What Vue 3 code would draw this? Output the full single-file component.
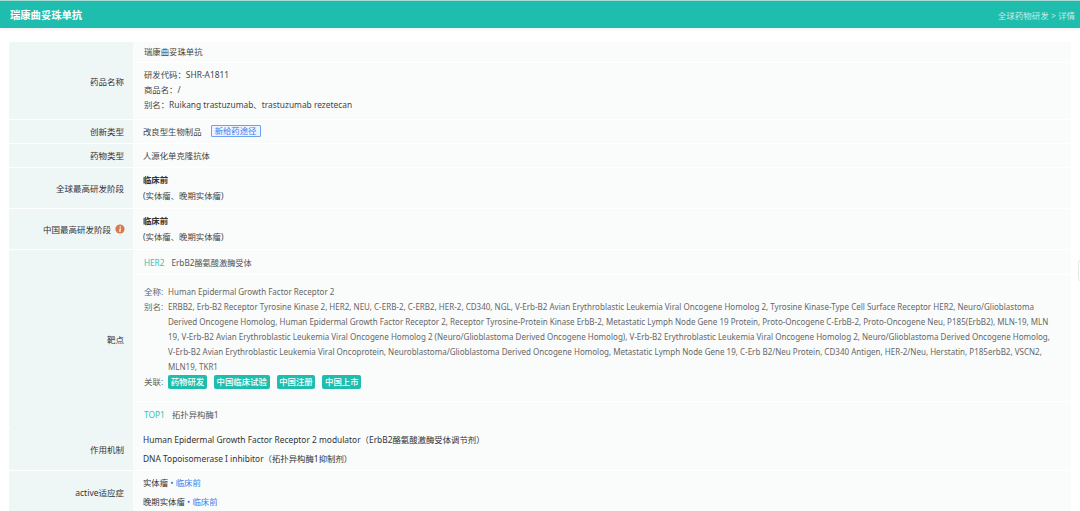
<script setup>
const aliases = 'ERBB2, Erb-B2 Receptor Tyrosine Kinase 2, HER2, NEU, C-ERB-2, C-ERB2, HER-2, CD340, NGL, V-Erb-B2 Avian Erythroblastic Leukemia Viral Oncogene Homolog 2, Tyrosine Kinase-Type Cell Surface Receptor HER2, Neuro/Glioblastoma Derived Oncogene Homolog, Human Epidermal Growth Factor Receptor 2, Receptor Tyrosine-Protein Kinase ErbB-2, Metastatic Lymph Node Gene 19 Protein, Proto-Oncogene C-ErbB-2, Proto-Oncogene Neu, P185(ErbB2), MLN-19, MLN 19, V-Erb-B2 Avian Erythroblastic Leukemia Viral Oncogene Homolog 2 (Neuro/Glioblastoma Derived Oncogene Homolog), V-Erb-B2 Erythroblastic Leukemia Viral Oncogene Homolog 2, Neuro/Glioblastoma Derived Oncogene Homolog, V-Erb-B2 Avian Erythroblastic Leukemia Viral Oncoprotein, Neuroblastoma/Glioblastoma Derived Oncogene Homolog, Metastatic Lymph Node Gene 19, C-Erb B2/Neu Protein, CD340 Antigen, HER-2/Neu, Herstatin, P185erbB2, VSCN2, MLN19, TKR1'
const links = ['药物研发', '中国临床试验', '中国注册', '中国上市']
</script>

<template>
  <div class="page">
    <header class="topbar">
      <span class="title">瑞康曲妥珠单抗</span>
      <span class="crumb">全球药物研发 &gt; 详情</span>
    </header>

    <main class="table">
      <div class="row name-row">
        <div class="label">药品名称</div>
        <div class="cell split">
          <div class="sub first">瑞康曲妥珠单抗</div>
          <div class="sub names">
            <div>研发代码：SHR-A1811</div>
            <div>商品名：/</div>
            <div>别名：Ruikang trastuzumab、trastuzumab rezetecan</div>
          </div>
        </div>
      </div>

      <div class="row short">
        <div class="label">创新类型</div>
        <div class="cell plain">改良型生物制品<span class="route">新给药途径</span></div>
      </div>

      <div class="row short">
        <div class="label">药物类型</div>
        <div class="cell plain">人源化单克隆抗体</div>
      </div>

      <div class="row stage">
        <div class="label">全球最高研发阶段</div>
        <div class="cell stage-cell">
          <strong>临床前</strong>
          <div>(实体瘤、晚期实体瘤)</div>
        </div>
      </div>

      <div class="row stage">
        <div class="label">
          中国最高研发阶段
          <svg class="info" width="10" height="10" viewBox="0 0 10 10">
            <circle cx="5" cy="5" r="4.6" fill="#d9794a" />
            <rect x="4.4" y="4.2" width="1.3" height="3.6" fill="#fff" transform="rotate(8 5 6)" />
            <rect x="4.6" y="2.2" width="1.3" height="1.2" fill="#fff" />
          </svg>
        </div>
        <div class="cell stage-cell">
          <strong>临床前</strong>
          <div>(实体瘤、晚期实体瘤)</div>
        </div>
      </div>

      <div class="row target-row">
        <div class="label">靶点</div>
        <div class="cell split">
          <div class="target-head">
            <span class="code">HER2</span><span>ErbB2酪氨酸激酶受体</span>
          </div>
          <div class="target-body">
            <div class="kv">
              <span class="key">全称:</span>
              <span>Human Epidermal Growth Factor Receptor 2</span>
            </div>
            <div class="kv">
              <span class="key">别名:</span>
              <span>{{ aliases }}</span>
            </div>
            <div class="kv related">
              <span class="key">关联:</span>
              <span class="tags">
                <span v-for="t in links" :key="t" class="tag">{{ t }}</span>
              </span>
            </div>
          </div>
          <div class="target-foot">
            <span class="code">TOP1</span><span>拓扑异构酶1</span>
          </div>
        </div>
      </div>

      <div class="row mech">
        <div class="label">作用机制</div>
        <div class="cell lines">
          <div>Human Epidermal Growth Factor Receptor 2 modulator（ErbB2酪氨酸激酶受体调节剂）</div>
          <div>DNA Topoisomerase I inhibitor（拓扑异构酶1抑制剂）</div>
        </div>
      </div>

      <div class="row mech">
        <div class="label">active适应症</div>
        <div class="cell lines">
          <div>实体瘤<span class="phase"> • 临床前</span></div>
          <div>晚期实体瘤<span class="phase"> • 临床前</span></div>
        </div>
      </div>
    </main>

    <div class="side-tab"></div>
  </div>
</template>

<style scoped>
.page {
  position: relative;
  width: 1080px;
  height: 511px;
  overflow: hidden;
  background: #fff;
  color: #444;
  font-family: "Noto Sans", "Noto Sans CJK SC", sans-serif;
  font-size: 8.4px;
}
.page * {
  box-sizing: border-box;
}
.topbar {
  height: 28px;
  display: flex;
  align-items: center;
  justify-content: space-between;
  padding: 0 5px 0 10px;
  border-top: 1px solid #a5dcd6;
  background: #1fbdae;
  box-shadow: 0 1px 3px rgba(0, 0, 0, 0.08);
}
.title {
  color: #fff;
  font-size: 10.3px;
  font-weight: 700;
}
.crumb {
  color: #bfeee8;
  font-size: 8.5px;
}
.table {
  display: flex;
  flex-direction: column;
  gap: 1px;
  margin: 14px 9px 0;
}
.row {
  display: grid;
  grid-template-columns: 124px 1fr;
  flex: none;
}
.label {
  display: flex;
  align-items: center;
  justify-content: flex-end;
  gap: 4px;
  padding-right: 9px;
  background: #eff6f6;
  border-radius: 2px 0 0 2px;
  color: #333;
  font-size: 8.5px;
}
.info {
  margin-right: -1px;
}
.cell {
  background: #fafcfc;
  padding-left: 10px;
}
.split {
  display: flex;
  flex-direction: column;
  gap: 1px;
  padding-left: 0;
  background: #fff;
}
.sub {
  background: #fafcfc;
  padding-left: 11px;
}
.first {
  height: 20px;
  line-height: 20px;
}
.names {
  height: 56px;
  padding-top: 4px;
  line-height: 15px;
}
.name-row {
  height: 77px;
}
.short {
  height: 23px;
}
.short .label,
.short .plain {
  padding-bottom: 1px;
}
.plain {
  display: flex;
  align-items: center;
}
.route {
  margin-left: 9px;
  padding: 0 3px;
  line-height: 10px;
  border: 1px solid #6ea0f2;
  border-radius: 1px;
  background: #eef4ff;
  color: #3b7bf0;
}
.stage {
  height: 40px;
}
.stage-cell {
  padding-top: 4px;
  line-height: 16px;
}
.stage-cell strong {
  display: block;
  color: #333;
}
.target-row {
  height: 177px;
}
.target-head {
  height: 24px;
  padding-left: 11px;
  line-height: 26px;
  background: #fafcfc;
  color: #555;
  font-size: 8.2px;
}
.code {
  margin-right: 7px;
  color: #35c2b4;
}
.target-body {
  height: 126px;
  padding: 9px 15px 0 11px;
  background: #fafcfc;
  color: #666;
  font-size: 8.03px;
  line-height: 15px;
}
.kv {
  display: flex;
  gap: 5px;
}
.key {
  flex: none;
  width: 19px;
  font-size: 8.5px;
  white-space: nowrap;
}
.related {
  align-items: center;
}
.tags {
  display: flex;
  gap: 7px;
}
.tag {
  padding: 0 2.7px;
  line-height: 14px;
  border-radius: 2px;
  background: #1fbdae;
  color: #fff;
  font-size: 8.4px;
  font-weight: 500;
}
.target-foot {
  flex: 1;
  padding-left: 11px;
  line-height: 26px;
  background: #fafcfc;
  color: #555;
}
.mech {
  height: 42px;
}
.lines {
  display: flex;
  flex-direction: column;
  justify-content: center;
  gap: 3px;
  line-height: 16px;
  color: #333;
}
.phase {
  color: #3b7bf0;
}
.side-tab {
  position: absolute;
  top: 259px;
  right: -6px;
  width: 8px;
  height: 23px;
  background: #fff;
  border: 1px solid #e6e6e6;
  border-radius: 4px;
}
</style>

<style>
html,
body {
  margin: 0;
  background: #fff;
}
</style>
